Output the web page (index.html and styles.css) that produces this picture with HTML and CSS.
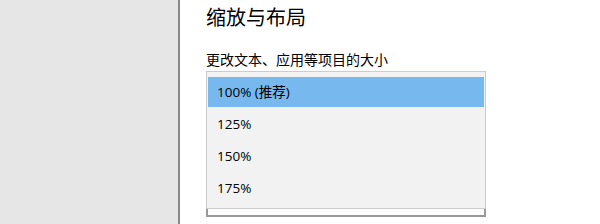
FILE: index.html
```html
<!DOCTYPE html>
<html lang="zh">
<head>
    <meta charset="UTF-8">
    <meta name="viewport" content="width=device-width, initial-scale=1.0">
    <title>缩放与布局</title>
    <link rel="stylesheet" href="styles.css">
</head>
<body>
    <div class="page">
        <div class="sidebar"></div>
        <div class="content">
            <h1>缩放与布局</h1>
            <div class="label">更改文本、应用等项目的大小</div>
            <div class="combo">
                <!-- 展开的下拉列表，盖在选择框上 -->
                <ul class="dropdown">
                    <li class="option selected">100% (推荐)</li>
                    <li class="option">125%</li>
                    <li class="option">150%</li>
                    <li class="option">175%</li>
                </ul>
            </div>
        </div>
    </div>
</body>
</html>
```

FILE: styles.css
```css
body {
    margin: 0;
    font-family: "Open Sans", "Noto Sans CJK SC", sans-serif;
    background-color: white;
    color: #000;
}
.page {
    display: flex;
    height: 224px;
    overflow: hidden;
}
.sidebar {
    width: 178px;
    flex-shrink: 0;
    background-color: #e6e6e6;
    border-right: 2px solid #888;
}
.content {
    flex: 1;
    padding-left: 26px;
}
h1 {
    font-family: "Noto Sans CJK SC", sans-serif;
    font-size: 20px;
    font-weight: normal;
    line-height: 28px;
    margin: 3px 0 0;
}
.label {
    font-family: "Noto Sans CJK SC", sans-serif;
    font-size: 14px;
    line-height: 20px;
    margin-top: 18px;
}
.combo {
    position: relative;
    width: 276px;
    height: 28px;
    margin-top: 116px;
    border: 2px solid #999;
    background-color: white;
}
.dropdown {
    position: absolute;
    left: -2px;
    top: -116px;
    width: 278px;
    margin: 0;
    padding: 4px 0;
    list-style: none;
    display: flex;
    flex-direction: column;
    background-color: #f2f2f2;
    border: 1px solid #ccc;
}
.option {
    height: 30px;
    margin: 1px;
    padding-left: 9px;
    font-size: 13.5px;
    line-height: 30px;
}
.option.selected {
    background-color: #77b8ee;
}
```
